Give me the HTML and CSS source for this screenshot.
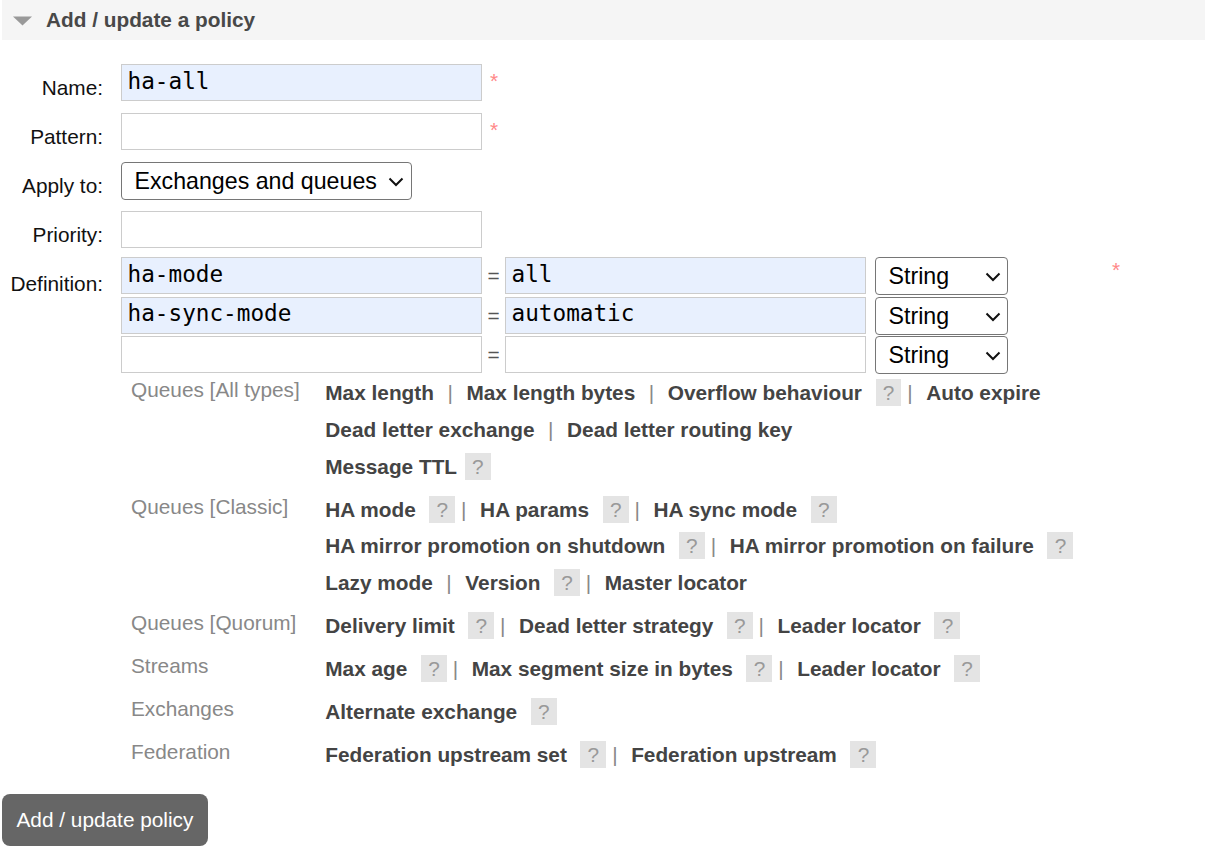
FILE: index.html
```html
<!DOCTYPE html>
<html>
<head>
<meta charset="utf-8">
<link rel="stylesheet" href="styles.css">
</head>
<body>
<div class="panel">
  <div class="panel-head">
    <svg class="tri" width="19" height="10" viewBox="0 0 19 10"><polygon points="0,0.5 19,0.5 9.5,9.5" fill="#999"/></svg>
    <h2 class="panel-title">Add / update a policy</h2>
  </div>
  <form class="policy-form">
    <div class="form-grid">
      <label class="lbl">Name:</label>
      <div class="field-row"><input class="txt filled" type="text" value="ha-all"><span class="mand">*</span></div>

      <label class="lbl">Pattern:</label>
      <div class="field-row"><input class="txt" type="text" value=""><span class="mand">*</span></div>

      <label class="lbl">Apply to:</label>
      <div class="field-row">
        <span class="sel-wrap">
          <select class="sel sel-apply"><option>Exchanges and queues</option></select>
          <svg class="chev" width="16" height="10" viewBox="0 0 16 10"><polyline points="1.5,1.5 8,8 14.5,1.5" fill="none" stroke="#111" stroke-width="2"/></svg>
        </span>
      </div>

      <label class="lbl">Priority:</label>
      <div class="field-row field-row-last"><input class="txt" type="text" value=""></div>

      <label class="lbl lbl-def">Definition:</label>
      <div class="def-cell">
        <div class="def-top">
          <div class="multi">
            <div class="def-row">
              <input class="txt filled" type="text" value="ha-mode"><span class="eq">=</span><input class="txt filled val" type="text" value="all">
              <span class="sel-wrap">
                <select class="sel sel-type"><option>String</option></select>
                <svg class="chev chev-type" width="16" height="10" viewBox="0 0 16 10"><polyline points="1.5,1.5 8,8 14.5,1.5" fill="none" stroke="#111" stroke-width="2"/></svg>
              </span>
            </div>
            <div class="def-row">
              <input class="txt filled" type="text" value="ha-sync-mode"><span class="eq">=</span><input class="txt filled val" type="text" value="automatic">
              <span class="sel-wrap">
                <select class="sel sel-type"><option>String</option></select>
                <svg class="chev chev-type" width="16" height="10" viewBox="0 0 16 10"><polyline points="1.5,1.5 8,8 14.5,1.5" fill="none" stroke="#111" stroke-width="2"/></svg>
              </span>
            </div>
            <div class="def-row">
              <input class="txt" type="text" value=""><span class="eq">=</span><input class="txt val" type="text" value="">
              <span class="sel-wrap">
                <select class="sel sel-type"><option>String</option></select>
                <svg class="chev chev-type" width="16" height="10" viewBox="0 0 16 10"><polyline points="1.5,1.5 8,8 14.5,1.5" fill="none" stroke="#111" stroke-width="2"/></svg>
              </span>
            </div>
          </div>
          <span class="mand mand-def">*</span>
        </div>

        <div class="help-table">
          <div class="help-label">Queues [All types]</div>
          <div class="help-links"><span class="arg">Max length</span> | <span class="arg">Max length bytes</span> | <span class="arg">Overflow behaviour</span> <span class="help">?</span> | <span class="arg">Auto expire</span><br><span class="arg">Dead letter exchange</span> | <span class="arg">Dead letter routing key</span><br><span class="arg">Message TTL</span><span class="help">?</span></div>

          <div class="help-label">Queues [Classic]</div>
          <div class="help-links"><span class="arg">HA mode</span> <span class="help">?</span> | <span class="arg">HA params</span> <span class="help">?</span> | <span class="arg">HA sync mode</span> <span class="help">?</span><br><span class="arg">HA mirror promotion on shutdown</span> <span class="help">?</span> | <span class="arg">HA mirror promotion on failure</span> <span class="help">?</span><br><span class="arg">Lazy mode</span> | <span class="arg">Version</span> <span class="help">?</span> | <span class="arg">Master locator</span></div>

          <div class="help-label">Queues [Quorum]</div>
          <div class="help-links"><span class="arg">Delivery limit</span> <span class="help">?</span> | <span class="arg">Dead letter strategy</span> <span class="help">?</span> | <span class="arg">Leader locator</span> <span class="help">?</span></div>

          <div class="help-label">Streams</div>
          <div class="help-links"><span class="arg">Max age</span> <span class="help">?</span> | <span class="arg">Max segment size in bytes</span> <span class="help">?</span> | <span class="arg">Leader locator</span> <span class="help">?</span></div>

          <div class="help-label">Exchanges</div>
          <div class="help-links"><span class="arg">Alternate exchange</span> <span class="help">?</span></div>

          <div class="help-label">Federation</div>
          <div class="help-links"><span class="arg">Federation upstream set</span> <span class="help">?</span> | <span class="arg">Federation upstream</span> <span class="help">?</span></div>
        </div>
      </div>
    </div>
    <button class="btn" type="button">Add / update policy</button>
  </form>
</div>
</body>
</html>
```

FILE: styles.css
```css
html, body {
  margin: 0;
  padding: 0;
  background: #fff;
}
body {
  font-family: "Liberation Sans", Arial, sans-serif;
  font-size: 20.8px;
  color: #222;
}
.panel {
  margin-left: 2px;
}
.panel-head {
  height: 40px;
  background: #f5f5f5;
  display: flex;
  align-items: center;
  padding-left: 11px;
}
.tri {
  display: block;
  margin-top: 1px;
  margin-right: 14px;
}
.panel-title {
  margin: 0;
  font-size: 20.8px;
  font-weight: bold;
  color: #484848;
  line-height: 24px;
}
.policy-form {
  margin: 24px 0 0 0;
}
.form-grid {
  display: grid;
  grid-template-columns: 101px auto;
  column-gap: 18px;
  align-items: start;
}
.lbl {
  text-align: right;
  line-height: 24px;
  padding-top: 12px;
  color: #111;
}
.lbl-def {
  padding-top: 15px;
}
.field-row {
  display: flex;
  align-items: flex-start;
  height: 49px;
}
.field-row-last {
  height: 46.3px;
}
.txt {
  box-sizing: border-box;
  width: 361px;
  height: 37px;
  margin: 0;
  padding: 2px 6px 6px 5.5px;
  border: 1px solid #ccc;
  border-radius: 0;
  background: #fff;
  font-family: "DejaVu Sans Mono", monospace;
  font-size: 22.7px;
  color: #000;
  outline: none;
}
.txt.filled {
  background: #e8f0fe;
}
.mand {
  color: #f88;
  margin-left: 8px;
  line-height: 24px;
  padding-top: 5px;
}
.mand-def {
  margin-left: 104px;
  padding-top: 1px;
}
.sel-wrap {
  position: relative;
  display: inline-block;
}
.sel {
  -webkit-appearance: none;
  appearance: none;
  box-sizing: border-box;
  height: 38px;
  margin: 0;
  padding: 0 30px 0 12.5px;
  border: 1px solid #767676;
  border-radius: 4px;
  background: #fff;
  font-family: "Liberation Sans", Arial, sans-serif;
  font-size: 23.2px;
  color: #000;
  display: block;
}
.sel-apply {
  width: 291px;
}
.sel-type {
  width: 133px;
}
.chev {
  position: absolute;
  right: 8px;
  top: 15px;
  pointer-events: none;
}
.chev-type {
  right: 7px;
}
.def-cell {
  display: flex;
  flex-direction: column;
}
.def-top {
  display: flex;
  align-items: flex-start;
}
.multi {
  display: flex;
  flex-direction: column;
  gap: 1.5px;
}
.def-row {
  display: flex;
  align-items: flex-start;
}
.eq {
  width: 23px;
  text-align: center;
  line-height: 37px;
  color: #555;
}
.val {
  margin-right: 9px;
}
.help-table {
  display: grid;
  grid-template-columns: 186.5px auto;
  padding-left: 10px;
  align-items: start;
}
.help-label {
  color: #888;
  line-height: 30.7px;
  padding-top: 1px;
  white-space: nowrap;
}
.help-links {
  color: #888;
  line-height: 36.7px;
  padding: 1px 0 5.2px 0;
  white-space: nowrap;
}
.arg {
  font-weight: bold;
  color: #444;
  padding: 0 7.8px;
}
.help {
  display: inline-block;
  line-height: 23px;
  padding: 2px 7.2px;
  background: #e4e4e4;
  color: #999;
}
.btn {
  display: block;
  margin-top: 15.7px;
  height: 52px;
  padding: 0 14.5px;
  border: none;
  border-radius: 8px;
  background: #666;
  color: #fff;
  font-family: "Liberation Sans", Arial, sans-serif;
  font-size: 20.8px;
}
```
